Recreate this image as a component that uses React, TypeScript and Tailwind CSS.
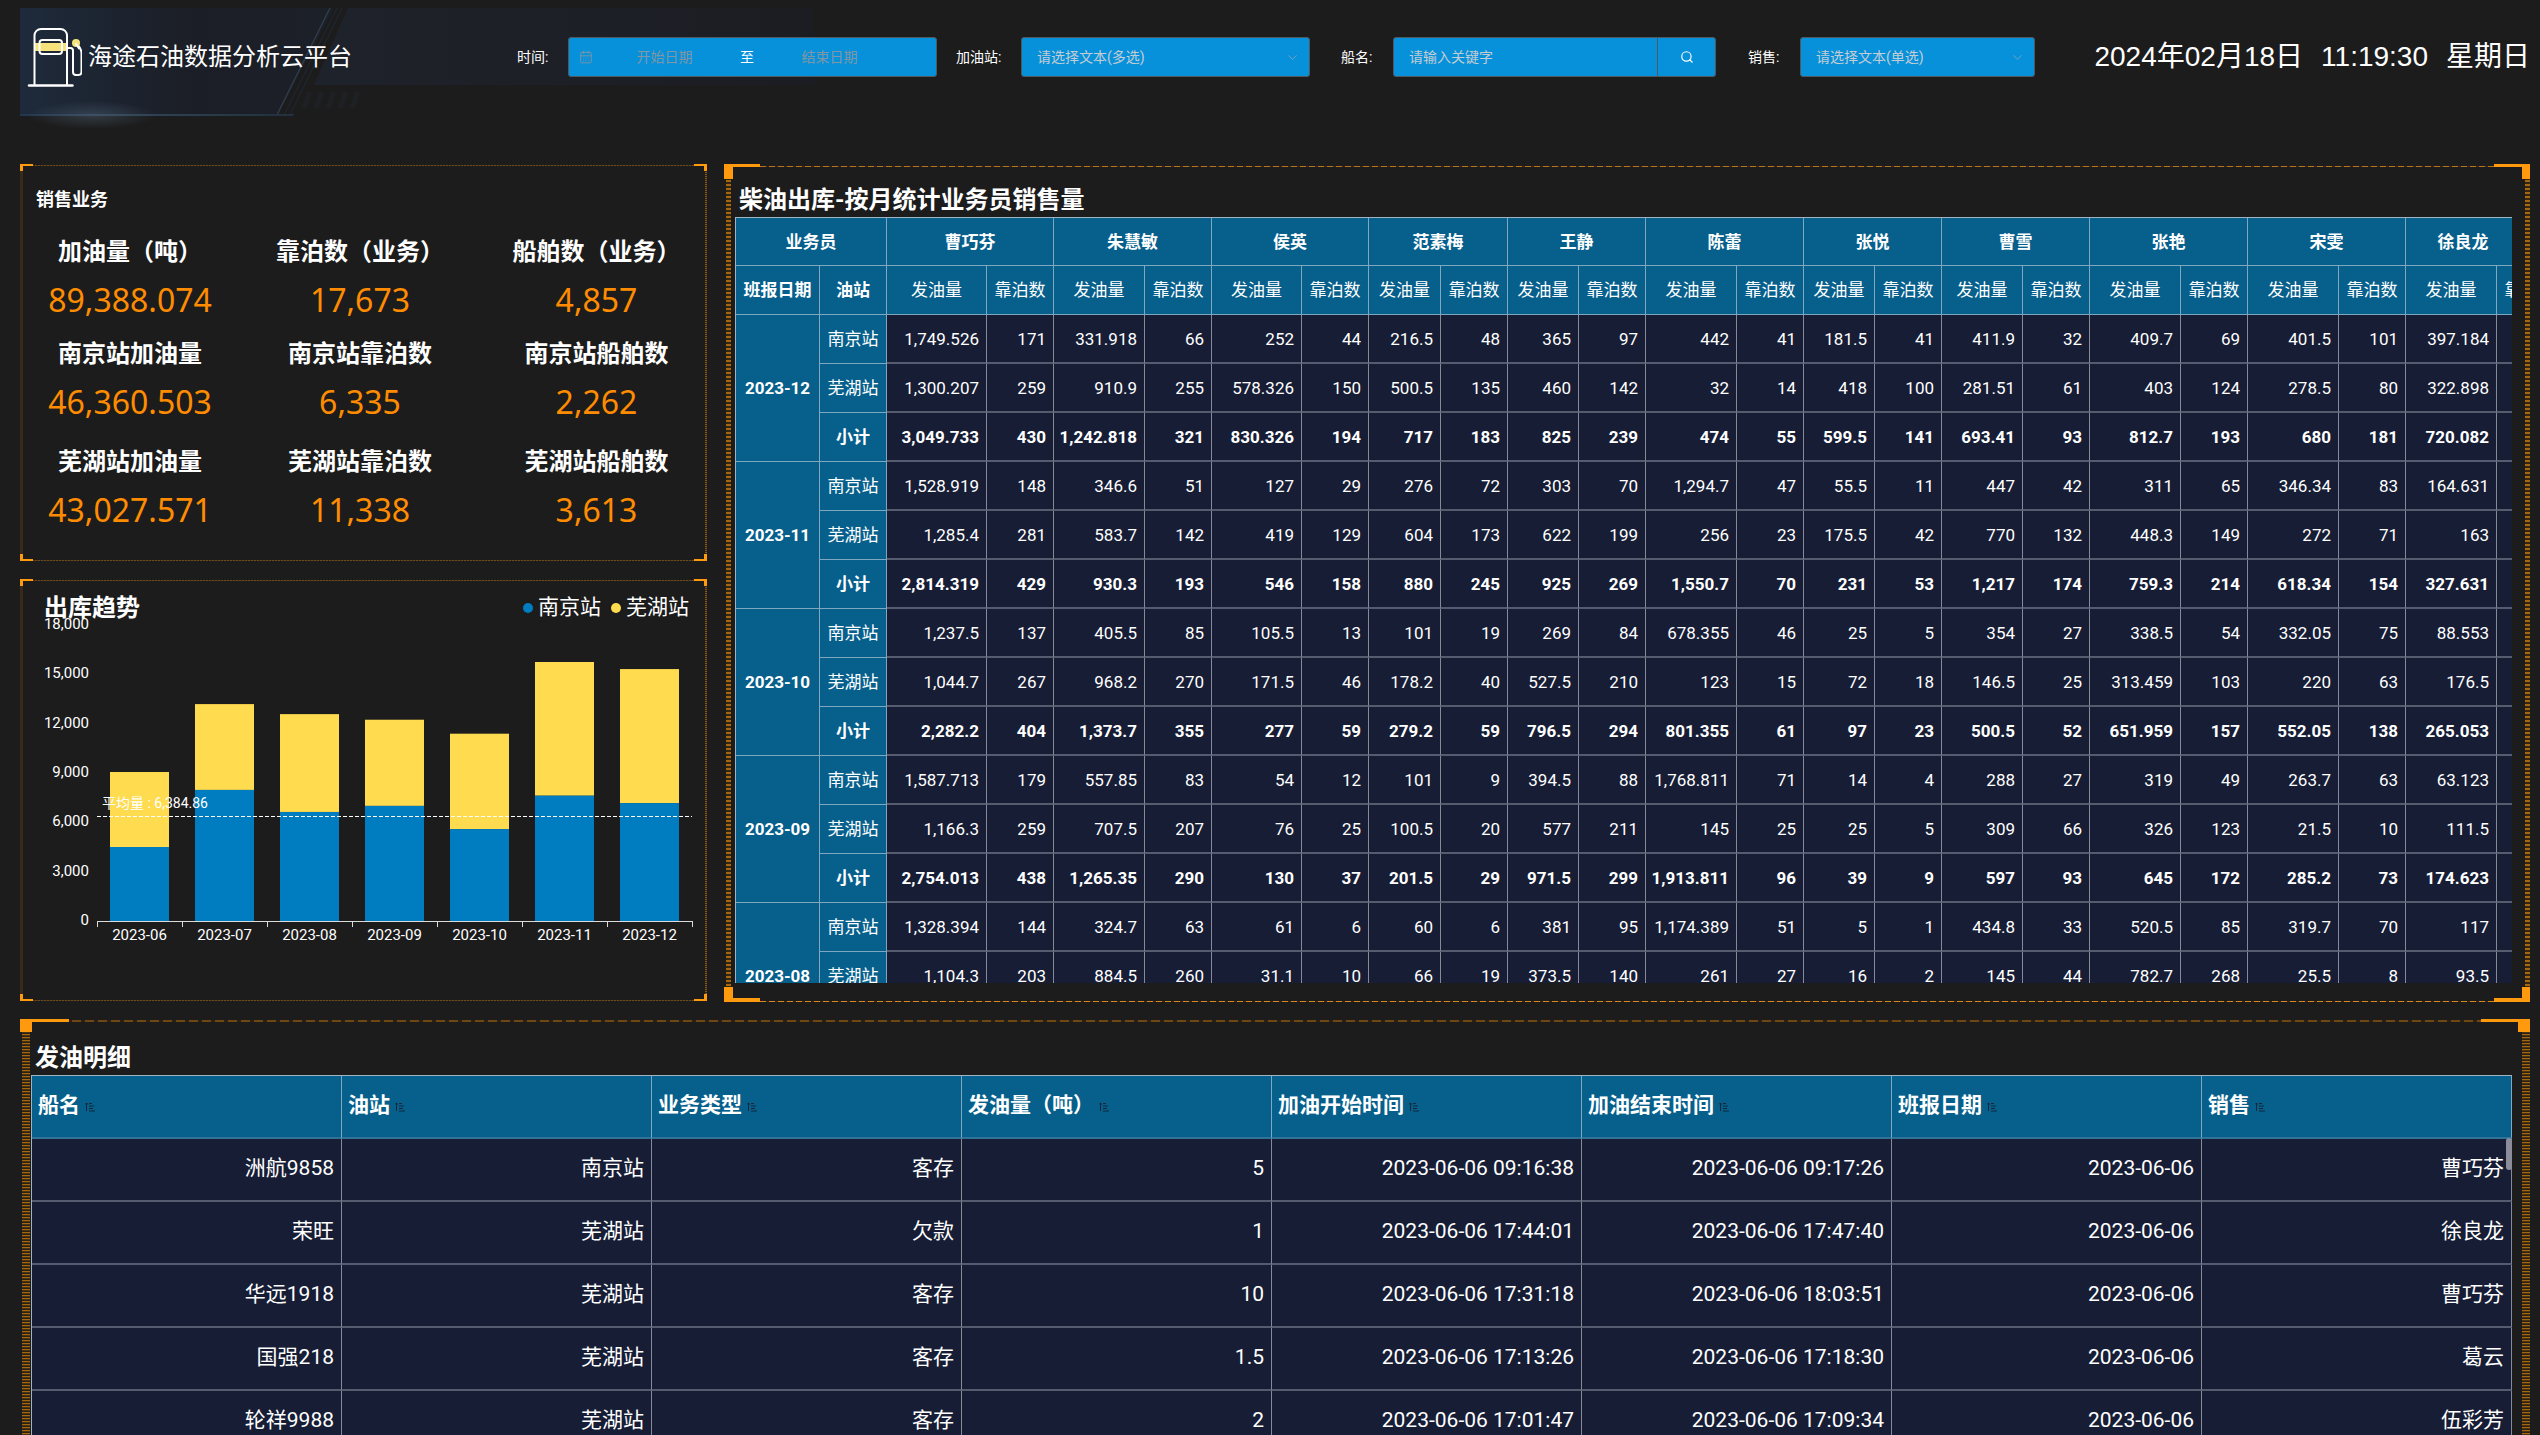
import React from "react";
import { Search, ChevronDown, CalendarDays } from "lucide-react";

const people: { name: string; w: number }[] = [
  { name: "曹巧芬", w: 100 },
  { name: "朱慧敏", w: 91 },
  { name: "侯英", w: 90 },
  { name: "范素梅", w: 72 },
  { name: "王静", w: 71 },
  { name: "陈蕾", w: 91 },
  { name: "张悦", w: 71 },
  { name: "曹雪", w: 81 },
  { name: "张艳", w: 91 },
  { name: "宋雯", w: 91 },
  { name: "徐良龙", w: 91 },
];
const DOCK_W = 67;

const months: { month: string; rows: { site: string; cells: string }[] }[] = [
  {
    month: "2023-12",
    rows: [
      { site: "南京站", cells: "1,749.526 171 331.918 66 252 44 216.5 48 365 97 442 41 181.5 41 411.9 32 409.7 69 401.5 101 397.184" },
      { site: "芜湖站", cells: "1,300.207 259 910.9 255 578.326 150 500.5 135 460 142 32 14 418 100 281.51 61 403 124 278.5 80 322.898" },
      { site: "小计", cells: "3,049.733 430 1,242.818 321 830.326 194 717 183 825 239 474 55 599.5 141 693.41 93 812.7 193 680 181 720.082" },
    ],
  },
  {
    month: "2023-11",
    rows: [
      { site: "南京站", cells: "1,528.919 148 346.6 51 127 29 276 72 303 70 1,294.7 47 55.5 11 447 42 311 65 346.34 83 164.631" },
      { site: "芜湖站", cells: "1,285.4 281 583.7 142 419 129 604 173 622 199 256 23 175.5 42 770 132 448.3 149 272 71 163" },
      { site: "小计", cells: "2,814.319 429 930.3 193 546 158 880 245 925 269 1,550.7 70 231 53 1,217 174 759.3 214 618.34 154 327.631" },
    ],
  },
  {
    month: "2023-10",
    rows: [
      { site: "南京站", cells: "1,237.5 137 405.5 85 105.5 13 101 19 269 84 678.355 46 25 5 354 27 338.5 54 332.05 75 88.553" },
      { site: "芜湖站", cells: "1,044.7 267 968.2 270 171.5 46 178.2 40 527.5 210 123 15 72 18 146.5 25 313.459 103 220 63 176.5" },
      { site: "小计", cells: "2,282.2 404 1,373.7 355 277 59 279.2 59 796.5 294 801.355 61 97 23 500.5 52 651.959 157 552.05 138 265.053" },
    ],
  },
  {
    month: "2023-09",
    rows: [
      { site: "南京站", cells: "1,587.713 179 557.85 83 54 12 101 9 394.5 88 1,768.811 71 14 4 288 27 319 49 263.7 63 63.123" },
      { site: "芜湖站", cells: "1,166.3 259 707.5 207 76 25 100.5 20 577 211 145 25 25 5 309 66 326 123 21.5 10 111.5" },
      { site: "小计", cells: "2,754.013 438 1,265.35 290 130 37 201.5 29 971.5 299 1,913.811 96 39 9 597 93 645 172 285.2 73 174.623" },
    ],
  },
  {
    month: "2023-08",
    rows: [
      { site: "南京站", cells: "1,328.394 144 324.7 63 61 6 60 6 381 95 1,174.389 51 5 1 434.8 33 520.5 85 319.7 70 117" },
      { site: "芜湖站", cells: "1,104.3 203 884.5 260 31.1 10 66 19 373.5 140 261 27 16 2 145 44 782.7 268 25.5 8 93.5" },
    ],
  },
];

const stats: { label: string; value: string }[][] = [
  [
    { label: "加油量（吨）", value: "89,388.074" },
    { label: "靠泊数（业务）", value: "17,673" },
    { label: "船舶数（业务）", value: "4,857" },
  ],
  [
    { label: "南京站加油量", value: "46,360.503" },
    { label: "南京站靠泊数", value: "6,335" },
    { label: "南京站船舶数", value: "2,262" },
  ],
  [
    { label: "芜湖站加油量", value: "43,027.571" },
    { label: "芜湖站靠泊数", value: "11,338" },
    { label: "芜湖站船舶数", value: "3,613" },
  ],
];

const trend = [
  { m: "2023-06", nj: 4500, total: 9060 },
  { m: "2023-07", nj: 7970, total: 13190 },
  { m: "2023-08", nj: 6630, total: 12580 },
  { m: "2023-09", nj: 7000, total: 12240 },
  { m: "2023-10", nj: 5590, total: 11390 },
  { m: "2023-11", nj: 7620, total: 15750 },
  { m: "2023-12", nj: 7170, total: 15320 },
];

const detailCols = ["船名", "油站", "业务类型", "发油量（吨）", "加油开始时间", "加油结束时间", "班报日期", "销售"];
const detailRows = [
  ["洲航9858", "南京站", "客存", "5", "2023-06-06 09:16:38", "2023-06-06 09:17:26", "2023-06-06", "曹巧芬"],
  ["荣旺", "芜湖站", "欠款", "1", "2023-06-06 17:44:01", "2023-06-06 17:47:40", "2023-06-06", "徐良龙"],
  ["华远1918", "芜湖站", "客存", "10", "2023-06-06 17:31:18", "2023-06-06 18:03:51", "2023-06-06", "曹巧芬"],
  ["国强218", "芜湖站", "客存", "1.5", "2023-06-06 17:13:26", "2023-06-06 17:18:30", "2023-06-06", "葛云"],
  ["轮祥9988", "芜湖站", "客存", "2", "2023-06-06 17:01:47", "2023-06-06 17:09:34", "2023-06-06", "伍彩芳"],
];

/* Decorative corner brackets and dotted edges of the small panels. */
function SmallFrame() {
  return (
    <div aria-hidden className="pointer-events-none absolute inset-0">
      <div className="absolute inset-y-0 left-0 w-[3px] bg-[#38291a]" />
      <div className="absolute inset-y-0 right-0 w-[2px] bg-[repeating-linear-gradient(to_bottom,#8a5a17_0_1px,#2f2417_1px_2px)]" />
      <div className="absolute inset-x-0 top-px h-px bg-[repeating-linear-gradient(to_right,#6b4a1c_0_2px,#3a2c18_2px_3px)]" />
      <div className="absolute inset-x-0 bottom-0 h-px bg-[repeating-linear-gradient(to_right,#6b4a1c_0_2px,#3a2c18_2px_3px)]" />
      <div className="absolute left-0 top-0 h-[7px] w-[13px] border-l-[3px] border-t-2 border-[#ff9a0e]" />
      <div className="absolute right-0 top-0 h-[7px] w-[13px] border-r-[3px] border-t-2 border-[#ff9a0e]" />
      <div className="absolute bottom-0 left-0 h-[7px] w-[13px] border-b-2 border-l-[3px] border-[#ff9a0e]" />
      <div className="absolute bottom-0 right-0 h-[7px] w-[13px] border-b-2 border-r-[3px] border-[#ff9a0e]" />
    </div>
  );
}

/* Heavier frame of the wide panels. */
function LargeFrame() {
  return (
    <div aria-hidden className="pointer-events-none absolute inset-0">
      <div className="absolute inset-y-0 left-[2px] w-[5px] bg-[repeating-linear-gradient(to_bottom,#a5670f_0_2px,#33250f_2px_4px)]" />
      <div className="absolute inset-y-0 right-0 w-[5px] bg-[repeating-linear-gradient(to_bottom,#a5670f_0_2px,#33250f_2px_4px)]" />
      <div className="absolute inset-x-0 top-[2px] h-px bg-[repeating-linear-gradient(to_right,#b8741a_0_6px,#3c2a14_6px_9px)]" />
      <div className="absolute inset-x-0 bottom-0 h-px bg-[repeating-linear-gradient(to_right,#d8871a_0_6px,#3c2a14_6px_9px)]" />
      <div className="absolute left-0 top-0 h-[15px] w-9 bg-[#ff9a0e] [clip-path:polygon(0_0,100%_0,100%_3px,9px_3px,9px_100%,0_100%)]" />
      <div className="absolute right-0 top-0 h-[15px] w-9 bg-[#ff9a0e] [clip-path:polygon(0_0,100%_0,100%_100%,28px_100%,28px_3px,0_3px)]" />
      <div className="absolute bottom-0 left-0 h-[15px] w-9 bg-[#ff9a0e] [clip-path:polygon(0_0,9px_0,9px_11px,100%_11px,100%_100%,0_100%)]" />
      <div className="absolute bottom-0 right-0 h-[15px] w-9 bg-[#ff9a0e] [clip-path:polygon(28px_0,100%_0,100%_100%,0_100%,0_11px,28px_11px)]" />
    </div>
  );
}

function DetailFrame() {
  return (
    <div aria-hidden className="pointer-events-none absolute inset-0">
      <div className="absolute inset-y-0 left-[2px] w-[8px] bg-[repeating-linear-gradient(to_bottom,#a5670f_0_1px,#4a3312_1px_2px,#2a2014_2px_3px)]" />
      <div className="absolute inset-y-0 right-0 w-[8px] bg-[repeating-linear-gradient(to_bottom,#a5670f_0_1px,#4a3312_1px_2px,#2a2014_2px_3px)]" />
      <div className="absolute inset-x-0 top-px h-[2px] bg-[repeating-linear-gradient(to_right,#6e4713_0_9px,#2a2117_9px_13px)]" />
      <div className="absolute left-0 top-0 h-[13px] w-[49px] bg-[#ff9a0e] [clip-path:polygon(0_0,100%_0,100%_3px,12px_3px,12px_100%,0_100%)]" />
      <div className="absolute right-0 top-0 h-[13px] w-[49px] bg-[#ff9a0e] [clip-path:polygon(0_0,100%_0,100%_100%,37px_100%,37px_3px,0_3px)]" />
    </div>
  );
}

function PumpLogo() {
  return (
    <svg width="56" height="62" viewBox="26 24 56 62" fill="none" strokeLinecap="round" strokeLinejoin="round" className="shrink-0" aria-hidden>
      <rect x="35" y="41" width="31" height="8" fill="#f6e27a" />
      <path d="M34.5 83V33.5a6.5 6.5 0 0 1 6.5-6.5h19.500a6.500 6.500 0 0 1 6.500 6.500V83" stroke="#fff" strokeWidth="2" />
      <path d="M29 83.500H72.500" stroke="#fff" strokeWidth="2.400" />
      <rect x="39.500" y="38" width="22.500" height="14" rx="3" stroke="#fff" strokeWidth="2" />
      <path d="M67 46h3.500a2.500 2.500 0 0 1 2.500 2.500V70a3 3 0 0 0 3 3h2.500a3 3 0 0 0 3-3V51c0-4-2-6-4.500-9" stroke="#fff" strokeWidth="2" />
      <circle cx="76" cy="41" r="4" fill="#f6e27a" />
      <path d="M76 42l3 4.500" stroke="#fff" strokeWidth="2" />
    </svg>
  );
}

function HeaderBackdrop() {
  return (
    <svg aria-hidden className="pointer-events-none absolute left-5 top-2" width="796" height="124" viewBox="0 0 796 124">
      <defs>
        <linearGradient id="plate" x1="0" y1="0" x2="1" y2="0">
          <stop offset="0" stopColor="#1e2a3b" />
          <stop offset="0.550" stopColor="#1b1e26" />
          <stop offset="1" stopColor="#1c2028" />
        </linearGradient>
        <linearGradient id="band" x1="0" y1="0" x2="1" y2="0">
          <stop offset="0" stopColor="#1e222a" />
          <stop offset="1" stopColor="#1c1d23" />
        </linearGradient>
        <linearGradient id="edge" x1="0" y1="0" x2="1" y2="0">
          <stop offset="0" stopColor="#22374f" />
          <stop offset="0.300" stopColor="#33485c" />
          <stop offset="1" stopColor="#22303f" />
        </linearGradient>
        <radialGradient id="glow">
          <stop offset="0" stopColor="#4a5b6c" stopOpacity="0.500" />
          <stop offset="1" stopColor="#4a5b6c" stopOpacity="0" />
        </radialGradient>
      </defs>
      <path d="M328 0H794V77H294Z" fill="url(#band)" />
      <path d="M0 0H314L257 108H0Z" fill="url(#plate)" />
      <path d="M310 0L257 107" stroke="#2f3b4a" strokeWidth="1.500" />
      <path d="M317 0L264 107M322 0L270 107" stroke="#1f2938" strokeWidth="1" />
      <path d="M0 106H275L272 108H0Z" fill="url(#edge)" />
      <ellipse cx="72" cy="107" rx="64" ry="14" fill="url(#glow)" />
      <path d="M290 84l-6 16M302 84l-6 16M314 84l-6 16M326 84l-6 16M338 84l-6 16" stroke="#1e2023" strokeWidth="5" />
    </svg>
  );
}

const fieldBox = "flex h-10 items-center rounded-[3px] border border-[#4f5a60] bg-[#0891db] text-sm";

function Header() {
  return (
    <header className="relative flex h-[116px] shrink-0 items-start pr-[10px] pt-9">
      <HeaderBackdrop />
      <div className="relative flex h-[42px] w-[517px] shrink-0 items-center pl-[26px]">
        <PumpLogo />
        <h1 className="ml-[6px] whitespace-nowrap text-2xl">海途石油数据分析云平台</h1>
      </div>
      <div className="relative flex h-[42px] min-w-0 flex-1 items-center text-sm">
        <span className="w-[51px] whitespace-nowrap">时间:</span>
        <div className={fieldBox + " w-[369px]"}>
          <CalendarDays size={14} strokeWidth={1.500} className="ml-[10px] text-[#7f97a5]" />
          <input aria-label="开始日期" placeholder="开始日期" className="min-w-0 flex-1 bg-transparent text-center outline-none placeholder:text-[#7f97a5]" />
          <span className="w-[22px] text-center">至</span>
          <input aria-label="结束日期" placeholder="结束日期" className="min-w-0 flex-1 bg-transparent text-center outline-none placeholder:text-[#7f97a5]" />
          <span className="w-[35px]" />
        </div>
        <label htmlFor="station" className="ml-[19px] w-[65px] whitespace-nowrap">加油站:</label>
        <div className={fieldBox + " relative w-[289px]"}>
          <select id="station" className="h-full w-full appearance-none bg-transparent pl-[15px] text-[#c3cdd3] outline-none">
            <option>请选择文本(多选)</option>
          </select>
          <ChevronDown size={15} strokeWidth={1.300} className="pointer-events-none absolute right-[9px] text-[#8fa3af]" />
        </div>
        <label htmlFor="ship" className="ml-[31px] w-[52px] whitespace-nowrap">船名:</label>
        <div className={fieldBox + " w-[323px]"}>
          <input id="ship" placeholder="请输入关键字" className="h-full min-w-0 flex-1 border-r border-[#4f5a60] bg-transparent pl-[15px] outline-none placeholder:text-[#c3cdd3]" />
          <button type="button" aria-label="搜索" className="flex h-full w-[57px] items-center justify-center">
            <Search size={14} strokeWidth={2} />
          </button>
        </div>
        <label htmlFor="sales" className="ml-8 w-[52px] whitespace-nowrap">销售:</label>
        <div className={fieldBox + " relative w-[235px]"}>
          <select id="sales" className="h-full w-full appearance-none bg-transparent pl-[15px] text-[#c3cdd3] outline-none">
            <option>请选择文本(单选)</option>
          </select>
          <ChevronDown size={15} strokeWidth={1.300} className="pointer-events-none absolute right-[9px] text-[#8fa3af]" />
        </div>
      </div>
      <div className="relative flex h-[42px] shrink-0 items-center gap-[18px] whitespace-nowrap font-['Liberation_Sans','Noto_Sans_CJK_SC',sans-serif] text-[28px]">
        <span>2024年02月18日</span>
        <span>11:19:30</span>
        <span>星期日</span>
      </div>
    </header>
  );
}

function StatsPanel() {
  return (
    <section className="relative h-[397px] pl-[13px] pr-[7px] pt-[22px]">
      <SmallFrame />
      <h2 className="pl-[3px] text-lg font-bold">销售业务</h2>
      <div className="mt-[21px] flex flex-col">
        {stats.map((row, i) => (
          <div key={i} className={"grid grid-cols-[194fr_266fr_207fr] text-center" + (i === 1 ? " mt-[14px]" : i === 2 ? " mt-5" : "")}>
            {row.map((s) => (
              <div key={s.label}>
                <div className="whitespace-nowrap text-2xl leading-[34px] font-bold">{s.label}</div>
                <div className="mt-2 font-['Noto_Sans',sans-serif] text-[32px] leading-[46px] text-[#ff8c00]">{s.value}</div>
              </div>
            ))}
          </div>
        ))}
      </div>
    </section>
  );
}

function TrendPanel() {
  const base = 312;
  const k = 296 / 18000;
  const y = (v: number) => base - v * k;
  return (
    <section className="relative h-[422px]">
      <SmallFrame />
      <div className="flex h-[58px] items-center justify-between pl-6 pr-[18px]">
        <h2 className="text-2xl font-bold">出库趋势</h2>
        <div className="flex items-center gap-[10px] text-[21px]">
          <span className="flex items-center gap-[5px]">
            <i className="size-[10px] rounded-full bg-[#007dc0]" />
            南京站
          </span>
          <span className="flex items-center gap-[5px]">
            <i className="size-[10px] rounded-full bg-[#ffdb4f]" />
            芜湖站
          </span>
        </div>
      </div>
      <svg viewBox="0 0 687 340" className="-mt-7 block w-full text-[15px]" fill="#fff" role="img" aria-label="出库趋势">
        {[0, 3000, 6000, 9000, 12000, 15000, 18000].map((t) => (
          <text key={t} x="69" y={y(t) + 4} textAnchor="end">
            {t.toLocaleString("en-US")}
          </text>
        ))}
        {trend.map((d, i) => (
          <g key={d.m}>
            <rect x={90 + i * 85} y={y(d.total)} width="59" height={y(d.nj) - y(d.total)} fill="#ffdb4f" />
            <rect x={90 + i * 85} y={y(d.nj)} width="59" height={base - y(d.nj)} fill="#007dc0" />
            <text x={119.5 + i * 85} y={base + 19} textAnchor="middle">
              {d.m}
            </text>
          </g>
        ))}
        <path d="M77 312.500H673" stroke="#dcdcdc" />
        <path d="M77.500 312v6M162.500 312v6M247.500 312v6M332.500 312v6M417.500 312v6M502.500 312v6M587.500 312v6M672.500 312v6" stroke="#dcdcdc" />
        <path d="M77 207.500H672" stroke="#fff" strokeDasharray="4 2" />
        <text x="82" y="199" className="text-sm">平均量 : 6,384.86</text>
      </svg>
    </section>
  );
}

const hdBase = "border-b border-r border-[#7fa8bf] bg-[#075f8c] p-0 text-center whitespace-nowrap";
const hd = "h-[49px] " + hdBase;

function SalesTable() {
  const total = 84 + 67 + people.reduce((a, p) => a + p.w + DOCK_W, 0);
  return (
    <section className="relative h-[838px] pl-[11px] pr-[18px] pt-[18px]">
      <LargeFrame />
      <h2 className="pl-1 pt-[2px] text-2xl leading-[33px] font-bold">柴油出库-按月统计业务员销售量</h2>
      <div className="h-[766px] overflow-hidden border-l border-t border-[#9fb4c0]">
        <table className="table-fixed border-separate border-spacing-0 text-[17px] leading-6" style={{ width: total }}>
          <colgroup>
            <col style={{ width: 84 }} />
            <col style={{ width: 67 }} />
            {people.map((p) => (
              <React.Fragment key={p.name}>
                <col style={{ width: p.w }} />
                <col style={{ width: DOCK_W }} />
              </React.Fragment>
            ))}
          </colgroup>
          <thead>
            <tr>
              <th colSpan={2} className={"h-12 font-bold " + hdBase}>业务员</th>
              {people.map((p, i) => (
                <th key={p.name} colSpan={2} className={"h-12 font-bold " + hdBase}>
                  <div className={i === people.length - 1 ? "w-[114px]" : ""}>{p.name}</div>
                </th>
              ))}
            </tr>
            <tr>
              <th className={hd + " font-bold"}>班报日期</th>
              <th className={hd + " font-bold"}>油站</th>
              {people.map((p) => (
                <React.Fragment key={p.name}>
                  <th className={hd + " font-normal"}>发油量</th>
                  <th className={hd + " font-normal"}>靠泊数</th>
                </React.Fragment>
              ))}
            </tr>
          </thead>
          <tbody>
            {months.map((g) =>
              g.rows.map((r, ri) => {
                const weight = ri === 2 ? " font-bold" : " font-normal";
                const cells = [...r.cells.split(" "), ""];
                const cut = g.rows.length < 3;
                return (
                  <tr key={g.month + r.site}>
                    {ri === 0 && (
                      <th rowSpan={g.rows.length} className={hd + " font-bold" + (cut ? " align-bottom" : "")}>
                        <div className={cut ? "pb-3" : ""}>{g.month}</div>
                      </th>
                    )}
                    <th className={hd + weight}>{r.site}</th>
                    {cells.map((c, i) => (
                      <td key={i} className={"h-[49px] border-b-2 border-r border-b-[#565c6f] border-r-[#868a98] bg-[#161d35] py-0 pl-0 pr-[7px] text-right" + weight}>
                        {c}
                      </td>
                    ))}
                  </tr>
                );
              })
            )}
          </tbody>
        </table>
      </div>
    </section>
  );
}

function SortIcon() {
  return (
    <svg width="10" height="10" viewBox="0 0 10 10" stroke="#12283a" fill="none" aria-hidden>
      <path d="M1.500 9V1M0 2.500L1.500 1L3 2.500M4 1.500H7M4 4H9M4 6.500H8M4 9H10" />
    </svg>
  );
}

function DetailTable() {
  return (
    <section className="relative min-h-0 flex-1 overflow-hidden pl-[11px] pr-[18px] pt-[21px]">
      <DetailFrame />
      <h2 className="pl-1 pt-[2px] text-2xl leading-[33px] font-bold">发油明细</h2>
      <div className="relative overflow-hidden border-l border-t border-[#9fb4c0]">
        <table className="w-full table-fixed border-separate border-spacing-0 text-[21px] leading-7">
          <thead>
            <tr>
              {detailCols.map((c) => (
                <th key={c} className="h-[63px] border-b-2 border-r border-b-[#2f7399] border-r-[#7fa8bf] bg-[#075f8c] pb-1 pl-[6px] pr-0 pt-0 text-left font-bold">
                  <div className="flex items-center gap-[5px]">
                    {c}
                    <button type="button" aria-label={c + "排序"} className="pt-1">
                      <SortIcon />
                    </button>
                  </div>
                </th>
              ))}
            </tr>
          </thead>
          <tbody>
            {detailRows.map((r) => (
              <tr key={r[0]}>
                {r.map((c, i) => (
                  <td key={i} className="h-[63px] border-b-2 border-r border-b-[#565c6f] border-r-[#868a98] bg-[#161d35] pb-1 pl-0 pr-[7px] pt-0 text-right">
                    {c}
                  </td>
                ))}
              </tr>
            ))}
          </tbody>
        </table>
        <div className="absolute right-0 top-[62px] h-8 w-[6px] rounded-[3px] bg-[#8b8e9a]" />
      </div>
    </section>
  );
}

export default function App() {
  return (
    <main className="flex h-screen flex-col overflow-hidden bg-[#1c1c1c] font-[Roboto,'Noto_Sans_CJK_SC',sans-serif] text-white">
      <Header />
      <div className="mt-12 grid shrink-0 grid-cols-[687fr_1806fr] gap-[17px] pl-5 pr-[10px]">
        <div className="flex min-w-0 flex-col gap-[18px]">
          <StatsPanel />
          <TrendPanel />
        </div>
        <div className="min-w-0">
          <SalesTable />
        </div>
      </div>
      <div className="mt-[17px] flex min-h-0 flex-1 flex-col pl-5 pr-[10px]">
        <DetailTable />
      </div>
    </main>
  );
}
